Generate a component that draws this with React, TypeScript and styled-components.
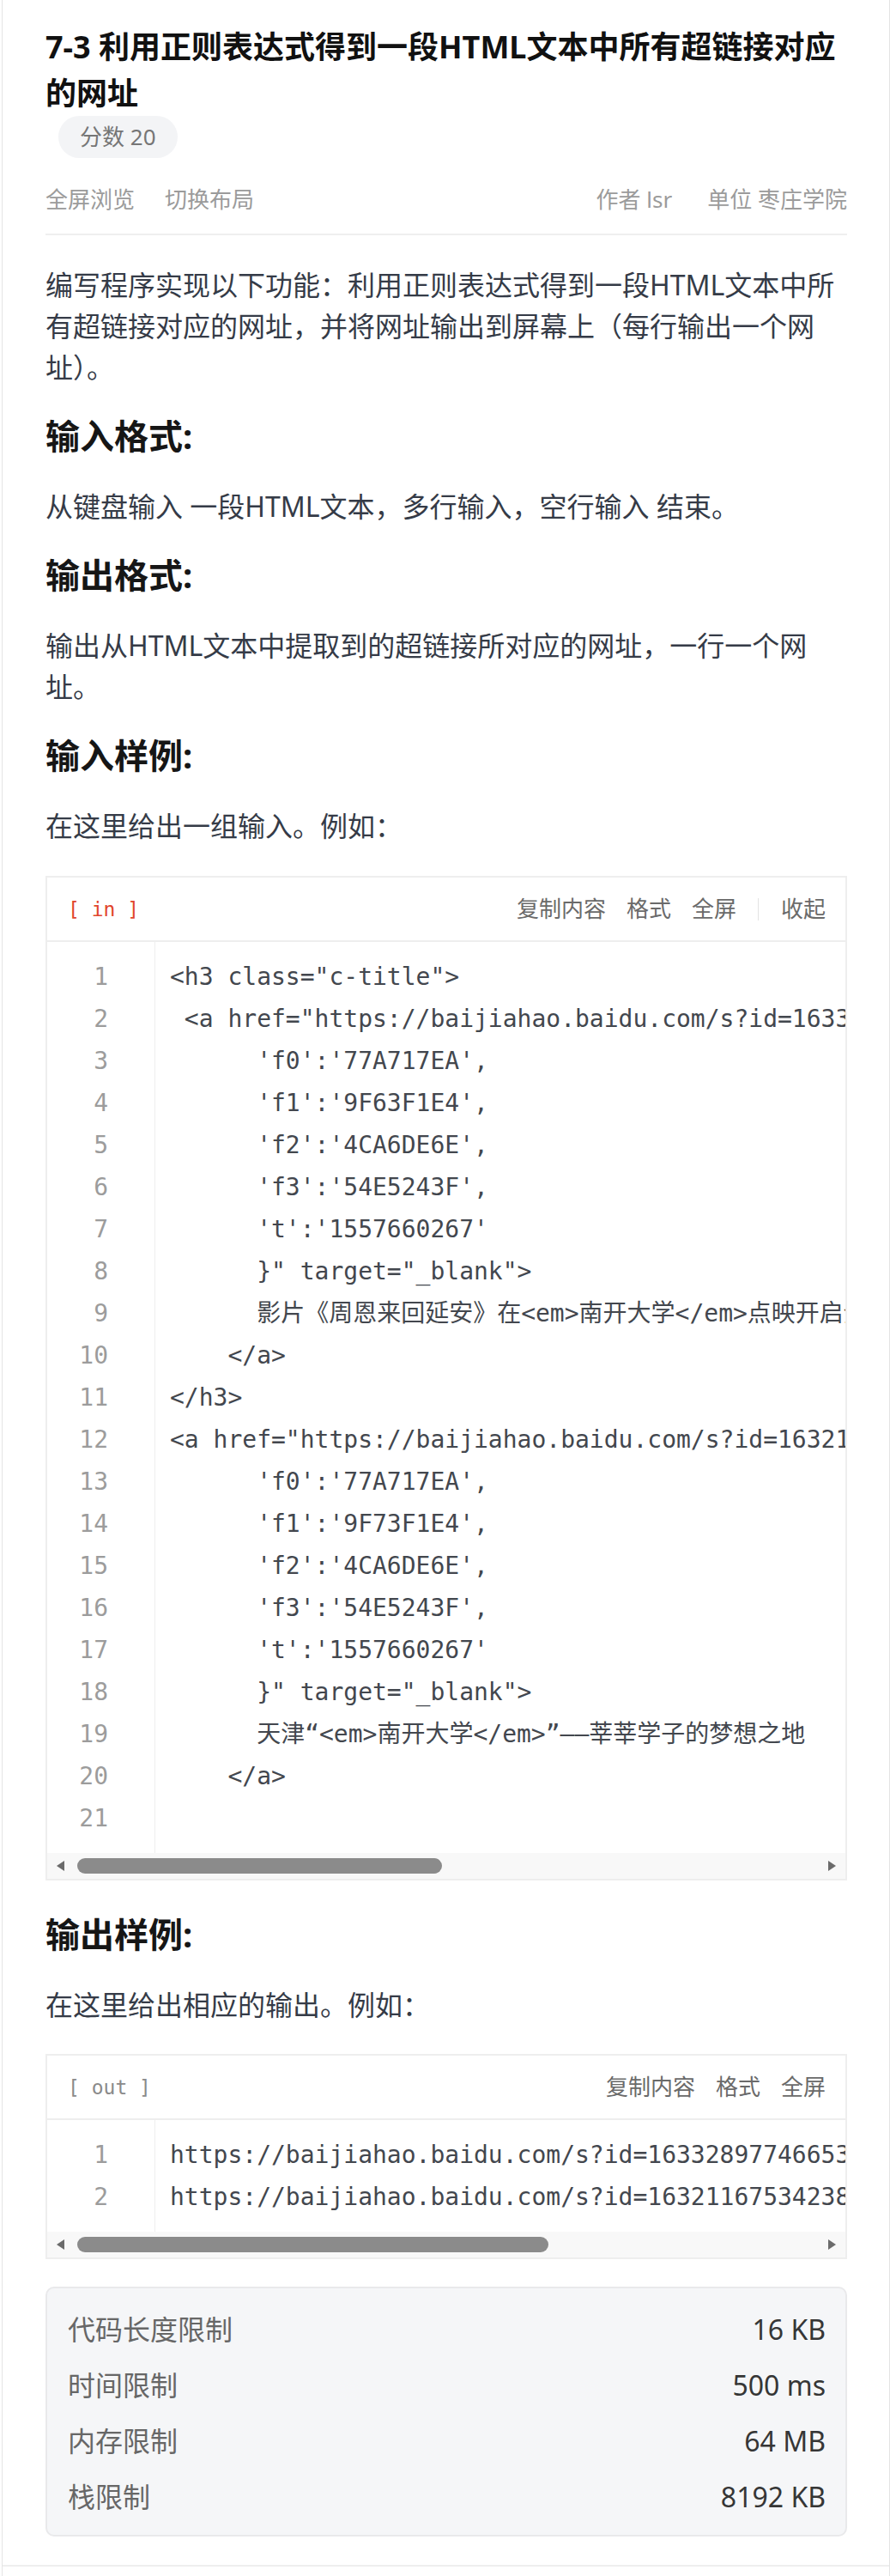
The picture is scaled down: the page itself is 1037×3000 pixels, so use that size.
import React from "react";
import styled, { createGlobalStyle } from "styled-components";

const GlobalStyle = createGlobalStyle`
  html, body { margin: 0; padding: 0; background: #ffffff; }
  body { font-family: "Noto Sans", "Noto Sans CJK SC", sans-serif; }
  * { box-sizing: border-box; }
`;

const MONO = `"DejaVu Sans Mono", "Liberation Mono", "Noto Sans CJK SC", monospace`;

const Shell = styled.div`
  margin-left: 2px;
  min-height: 3000px;
  border-left: 1px solid #e4e4e4;
  border-right: 1px solid #e4e4e4;
`;

const Panel = styled.main`
  padding: 28px 49px 33px 50px;
  border-bottom: 2px solid #eeeeee;
`;

const Title = styled.h1`
  margin: 0;
  font-size: 36px;
  line-height: 54px;
  font-weight: 700;
  color: #111111;
`;

const ScoreTag = styled.span`
  display: inline-block;
  margin: -1px 0 0 15px;
  height: 49px;
  padding: 0 25px;
  border-radius: 25px;
  background: #f3f4f6;
  color: #767676;
  font-size: 26px;
  line-height: 49px;
`;

const MetaRow = styled.div`
  margin-top: 29px;
  display: flex;
  justify-content: space-between;
  align-items: center;
  font-size: 26px;
  line-height: 39px;
  color: #9b9b9b;
`;

const MetaGroup = styled.div<{ $gap: number }>`
  display: flex;
  gap: ${(p) => p.$gap}px;
`;

const Divider = styled.hr`
  margin: 20px 0 0;
  border: 0;
  height: 2px;
  background: #efefef;
`;

const Para = styled.p<{ $top: number }>`
  margin: ${(p) => p.$top}px 0 0;
  font-size: 32px;
  line-height: 48px;
  color: #353b47;
`;

const Heading = styled.h2`
  margin: 26px 0 0;
  font-size: 40px;
  line-height: 60px;
  font-weight: 700;
  color: #161616;
`;

const CodeBox = styled.section<{ $top: number }>`
  margin-top: ${(p) => p.$top}px;
  border: 2px solid #eeeeee;
  background: #ffffff;
`;

const CodeHeader = styled.div`
  height: 75px;
  padding: 0 23px 0 24px;
  border-bottom: 2px solid #eeeeee;
  display: flex;
  align-items: center;
  justify-content: space-between;
`;

const IoLabel = styled.span<{ $red?: boolean }>`
  font-family: ${MONO};
  font-size: 23px;
  color: ${(p) => (p.$red ? "#e1452c" : "#8a8a8a")};
  white-space: pre;
`;

const Actions = styled.div`
  display: flex;
  align-items: center;
  gap: 24px;
  font-size: 26px;
  line-height: 39px;
  color: #6a6a6a;
`;

const ActionSep = styled.span`
  width: 1px;
  height: 26px;
  background: #e3e3e3;
  margin: 0 2px 0 1px;
`;

const CodeBody = styled.div`
  display: flex;
  padding: 16px 0;
`;

const Gutter = styled.div`
  flex: 0 0 126px;
  padding-right: 54px;
  border-right: 1px solid #eeeeee;
  text-align: right;
  font-family: ${MONO};
  font-size: 28px;
  line-height: 49px;
  color: #9c9c9c;
  margin: -16px 0;
  padding-top: 16px;
  padding-bottom: 16px;
`;

const CodeText = styled.div`
  flex: 1;
  min-width: 0;
  overflow: hidden;
  padding-left: 17px;
  font-family: ${MONO};
  font-size: 28px;
  line-height: 49px;
  color: #43474e;
  white-space: pre;
`;

const CodeLine = styled.div`
  height: 49px;
`;

const ScrollTrack = styled.div`
  height: 30px;
  background: #f8f8f8;
  display: flex;
  align-items: center;
  padding: 0 11px;
`;

const Arrow = styled.span<{ $dir: "left" | "right" }>`
  width: 0;
  height: 0;
  border-top: 6px solid transparent;
  border-bottom: 6px solid transparent;
  ${(p) =>
    p.$dir === "left"
      ? "border-right: 9px solid #6b6b6b; margin-right: 15px;"
      : "border-left: 9px solid #6b6b6b; margin-left: auto;"}
`;

const Thumb = styled.span<{ $width: number }>`
  width: ${(p) => p.$width}px;
  height: 18px;
  border-radius: 9px;
  background: #8b8b8b;
`;

const Limits = styled.section`
  margin-top: 32px;
  border: 2px solid #e9e9eb;
  border-radius: 10px;
  background: #f5f6f8;
  padding: 15px 23px 12px 24px;
`;

const LimitRow = styled.div`
  display: flex;
  justify-content: space-between;
  padding: 8px 0;
  font-size: 32px;
  line-height: 49px;
`;

const LimitLabel = styled.span`
  color: #676767;
`;

const LimitValue = styled.span`
  color: #363636;
`;

const inputLines = [
  `<h3 class="c-title">`,
  ` <a href="https://baijiahao.baidu.com/s?id=1633289774665310251&wfr=spider&for=pc" data-click="{`,
  `      'f0':'77A717EA',`,
  `      'f1':'9F63F1E4',`,
  `      'f2':'4CA6DE6E',`,
  `      'f3':'54E5243F',`,
  `      't':'1557660267'`,
  `      }" target="_blank">`,
  `      影片《周恩来回延安》在<em>南开大学</em>点映开启全国高校巡映活动`,
  `    </a>`,
  `</h3>`,
  `<a href="https://baijiahao.baidu.com/s?id=1632116753423806445&wfr=spider&for=pc" data-click="{`,
  `      'f0':'77A717EA',`,
  `      'f1':'9F73F1E4',`,
  `      'f2':'4CA6DE6E',`,
  `      'f3':'54E5243F',`,
  `      't':'1557660267'`,
  `      }" target="_blank">`,
  `      天津“<em>南开大学</em>”——莘莘学子的梦想之地`,
  `    </a>`,
  ``,
];

const outputLines = [
  `https://baijiahao.baidu.com/s?id=1633289774665310251&wfr=spider&for=pc`,
  `https://baijiahao.baidu.com/s?id=1632116753423806445&wfr=spider&for=pc`,
];

const limits = [
  ["代码长度限制", "16 KB"],
  ["时间限制", "500 ms"],
  ["内存限制", "64 MB"],
  ["栈限制", "8192 KB"],
];

type SampleProps = {
  label: string;
  red?: boolean;
  lines: string[];
  collapsible?: boolean;
  thumb: number;
  top: number;
};

function Sample({ label, red, lines, collapsible, thumb, top }: SampleProps) {
  return (
    <CodeBox $top={top}>
      <CodeHeader>
        <IoLabel $red={red}>{label}</IoLabel>
        <Actions>
          <span>复制内容</span>
          <span>格式</span>
          <span>全屏</span>
          {collapsible && (
            <>
              <ActionSep />
              <span>收起</span>
            </>
          )}
        </Actions>
      </CodeHeader>
      <CodeBody>
        <Gutter>
          {lines.map((_, i) => (
            <CodeLine key={i}>{i + 1}</CodeLine>
          ))}
        </Gutter>
        <CodeText>
          {lines.map((l, i) => (
            <CodeLine key={i}>{l}</CodeLine>
          ))}
        </CodeText>
      </CodeBody>
      <ScrollTrack>
        <Arrow $dir="left" />
        <Thumb $width={thumb} />
        <Arrow $dir="right" />
      </ScrollTrack>
    </CodeBox>
  );
}

export default function App() {
  return (
    <>
      <GlobalStyle />
      <Shell>
        <Panel>
          <Title>7-3 利用正则表达式得到一段HTML文本中所有超链接对应的网址</Title>
          <ScoreTag>分数 20</ScoreTag>
          <MetaRow>
            <MetaGroup $gap={35}>
              <span>全屏浏览</span>
              <span>切换布局</span>
            </MetaGroup>
            <MetaGroup $gap={41}>
              <span>作者 lsr</span>
              <span>单位 枣庄学院</span>
            </MetaGroup>
          </MetaRow>
          <Divider />
          <Para $top={34}>
            编写程序实现以下功能：利用正则表达式得到一段HTML文本中所有超链接对应的网址，并将网址输出到屏幕上（每行输出一个网址）。
          </Para>
          <Heading>输入格式:</Heading>
          <Para $top={28}>从键盘输入 一段HTML文本，多行输入，空行输入 结束。</Para>
          <Heading>输出格式:</Heading>
          <Para $top={28}>输出从HTML文本中提取到的超链接所对应的网址，一行一个网址。</Para>
          <Heading>输入样例:</Heading>
          <Para $top={28}>在这里给出一组输入。例如：</Para>
          <Sample label="[ in ]" red lines={inputLines} collapsible thumb={425} top={34} />
          <Heading style={{ marginTop: 33 }}>输出样例:</Heading>
          <Para $top={28}>在这里给出相应的输出。例如：</Para>
          <Sample label="[ out ]" lines={outputLines} thumb={549} top={33} />
          <Limits>
            {limits.map(([k, v]) => (
              <LimitRow key={k}>
                <LimitLabel>{k}</LimitLabel>
                <LimitValue>{v}</LimitValue>
              </LimitRow>
            ))}
          </Limits>
        </Panel>
      </Shell>
    </>
  );
}
